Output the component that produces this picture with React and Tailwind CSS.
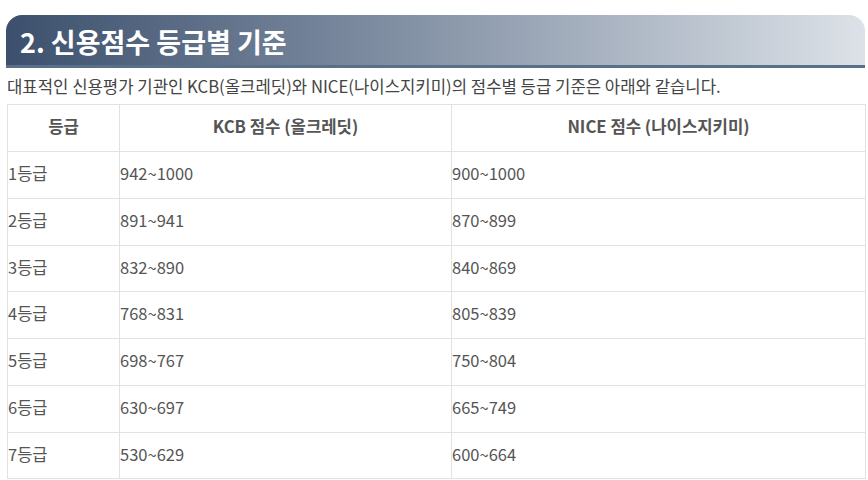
import React from "react";

const rows = [
  ["1등급", "942~1000", "900~1000"],
  ["2등급", "891~941", "870~899"],
  ["3등급", "832~890", "840~869"],
  ["4등급", "768~831", "805~839"],
  ["5등급", "698~767", "750~804"],
  ["6등급", "630~697", "665~749"],
  ["7등급", "530~629", "600~664"],
];

export default function App() {
  return (
    <div
      className="w-[868px] h-[480px] overflow-hidden bg-white pl-[6px] pr-[3px] pt-[15px]"
      style={{ fontFamily: '"Noto Sans CJK KR", "Noto Sans", sans-serif' }}
    >
      {/* heading */}
      <div className="h-[53px] rounded-t-[16px] border-b-[3px] border-[#5a6f88] bg-gradient-to-r from-[#3c506d] to-[#dde2e8] flex items-center pl-[14px]">
        <h2 className="text-[27px] font-bold text-white leading-none pt-[2px]">
          2. 신용점수 등급별 기준
        </h2>
      </div>

      {/* intro */}
      <p className="mt-[8px] pl-px text-[16.7px] leading-[20px] text-[#444]">
        대표적인 신용평가 기관인 KCB(올크레딧)와 NICE(나이스지키미)의 점수별 등급 기준은 아래와 같습니다.
      </p>

      {/* table */}
      <table className="mt-[8px] ml-px w-[859px] border-collapse text-[16.5px] text-[#555]">
        <colgroup>
          <col className="w-[112px]" />
          <col className="w-[332px]" />
          <col />
        </colgroup>
        <thead>
          <tr className="h-[47px]">
            <th className="border border-[#e2e2e2] pb-[3px] font-bold text-[16.7px] text-center">등급</th>
            <th className="border border-[#e2e2e2] pb-[3px] font-bold text-[16.7px] text-center">KCB 점수 (올크레딧)</th>
            <th className="border border-[#e2e2e2] pb-[3px] font-bold text-[16.7px] text-center">NICE 점수 (나이스지키미)</th>
          </tr>
        </thead>
        <tbody>
          {rows.map((r) => (
            <tr key={r[0]} className="h-[46.75px]">
              {r.map((c, i) => (
                <td key={i} className="border border-[#e2e2e2] p-0 pb-[3px] text-left align-middle">
                  {c}
                </td>
              ))}
            </tr>
          ))}
        </tbody>
      </table>
    </div>
  );
}
